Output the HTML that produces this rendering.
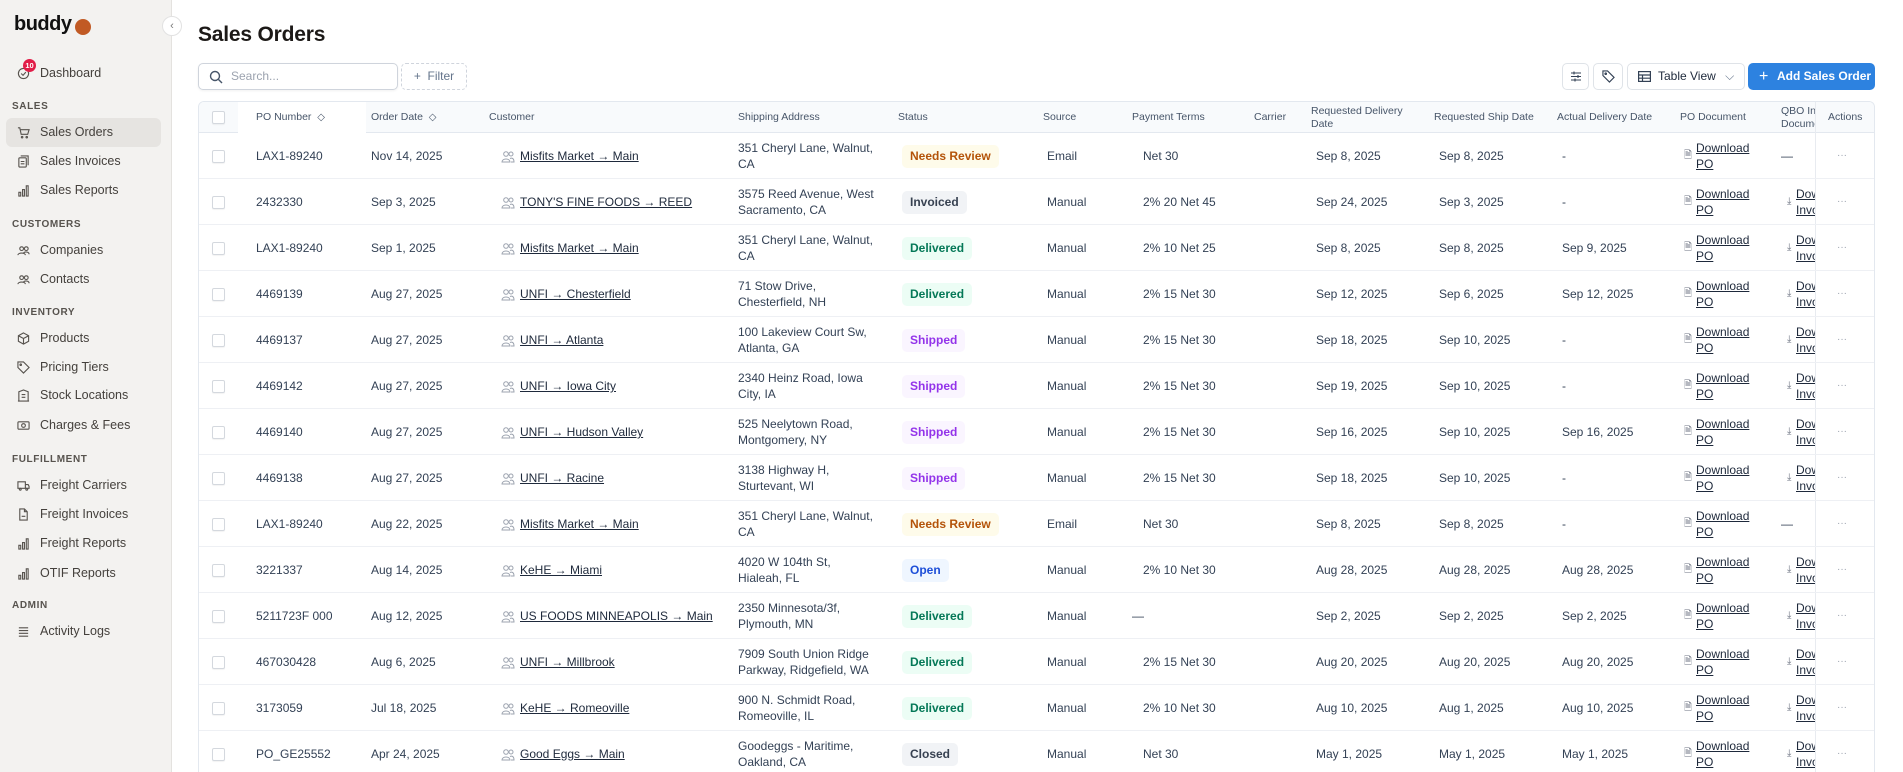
<!DOCTYPE html>
<html><head><meta charset="utf-8">
<style>
*{box-sizing:border-box;margin:0;padding:0}
html,body{width:1903px;height:772px;overflow:hidden}
body{background:#fff;font-family:"Liberation Sans",Arial,sans-serif;color:#334155;position:relative}
.sb{position:absolute;left:0;top:0;width:172px;height:772px;background:#f3f2f0;border-right:1px solid #e4e2df}
.logo{position:absolute;left:14px;top:13px;font-size:20px;font-weight:700;color:#111;letter-spacing:-0.5px}
.dot{position:absolute;left:75px;top:19px;width:16px;height:16px;border-radius:50%;background:#c15a24}
.col{position:absolute;left:162px;top:16px;width:20px;height:20px;border-radius:50%;background:#fff;border:1px solid #e2e2e2;font-size:11px;color:#777;text-align:center;line-height:18px}
.it{position:absolute;left:6px;width:155px;height:29px;border-radius:6px;font-size:12.5px;color:#44403c;line-height:29px;padding-left:34px}
.it.on{background:#e6e4e1}
.it svg{position:absolute;left:11px;top:8px}
.sec{position:absolute;left:12px;font-size:10px;font-weight:700;color:#57534e;letter-spacing:.6px}
h1{position:absolute;left:198px;top:23px;font-size:21px;font-weight:700;color:#1c1917;letter-spacing:-.2px}
.search{position:absolute;left:198px;top:63px;width:200px;height:27px;border:1px solid #cfd4dc;border-radius:5px;box-shadow:0 1px 2px rgba(0,0,0,.06);font-size:12px;color:#9ca3af;line-height:25px;padding-left:32px}
.filter{position:absolute;left:401px;top:63px;width:66px;height:27px;border:1px dashed #cfd4dc;border-radius:5px;font-size:12px;color:#64748b;line-height:25px;text-align:center}
.btn{position:absolute;top:63px;height:27px;border:1px solid #dfe3e8;border-radius:5px;background:#fff;font-size:12px;color:#1e293b;line-height:25px}
.add{position:absolute;left:1748px;top:63px;width:127px;height:27px;border-radius:5px;background:#2d82e0;color:#fff;font-size:12px;font-weight:700;line-height:27px;padding-left:29px;white-space:nowrap}
.tbl{position:absolute;left:198px;top:101px;width:1677px;height:671px;border:1px solid #e3e8ef;border-bottom:none;border-radius:6px 6px 0 0;overflow:hidden}
.hd{position:absolute;left:0;top:0;width:1676px;height:31px;background:#f8fafc;border-bottom:1px solid #e3e8ef}
.h{position:absolute;top:0;height:31px;display:flex;align-items:center;font-size:10.5px;color:#475569;line-height:13px}
.r{position:absolute;left:0;width:1676px;height:46px;border-bottom:1px solid #eef0f4}
.c{position:absolute;top:0;height:46px;display:flex;align-items:center;font-size:12px;color:#334155;line-height:16px;white-space:nowrap}
.cb{width:13px;height:13px;border:1px solid #d4d8de;border-radius:2px;background:#fff;box-shadow:0 1px 1px rgba(0,0,0,.05)}
a{color:#1e293b;text-decoration:underline}
.b{font-weight:700;font-size:12px;padding:0 8px;height:23px;line-height:23px;border-radius:5px;display:inline-block}
.nr{background:#fefbea;color:#b45309}.iv{background:#f1f3f6;color:#374151}.dl{background:#ecfdf5;color:#047857}.sp{background:#faf5ff;color:#9333ea}.op{background:#eff6ff;color:#1d4ed8}.cl{background:#f1f3f6;color:#374151}
.acol{position:absolute;left:1616px;top:0;width:60px;height:700px;border-left:1px solid #e8ebf0}
.q{overflow:hidden;width:19px}
</style></head><body>
<div class="sb">
<div class="logo">buddy</div><div class="dot"></div>
<div class="col">‹</div>
<div class="it" style="top:59px"><svg width="13" height="13" viewBox="0 0 14 14" fill="none" stroke="#57534e" stroke-width="1.2"><circle cx="7" cy="7" r="5.5"/><path d="M4.5 7l2 2 3-3.5"/></svg>Dashboard</div>
<div style="position:absolute;left:23px;top:59px;width:13px;height:13px;border-radius:50%;background:#e11d48;color:#fff;font-size:7.5px;line-height:13px;text-align:center;font-weight:700">10</div>
<div class="sec" style="top:101px">SALES</div>
<div class="it on" style="top:118px"><svg width="13" height="13" viewBox="0 0 14 14" fill="none" stroke="#57534e" stroke-width="1.2"><path d="M1 2h2l1.5 7h7l1.5-5H4"/><circle cx="5.5" cy="12" r=".8"/><circle cx="10.5" cy="12" r=".8"/></svg>Sales Orders</div>
<div class="it" style="top:147px"><svg width="13" height="13" viewBox="0 0 14 14" fill="none" stroke="#57534e" stroke-width="1.2"><rect x="2" y="3" width="8" height="10" rx="1"/><path d="M4 1h8v10M4 7h4M4 9.5h4"/></svg>Sales Invoices</div>
<div class="it" style="top:176px"><svg width="13" height="13" viewBox="0 0 14 14" fill="none" stroke="#57534e" stroke-width="1.2"><path d="M2 13V9h2v4zM6 13V6h2v7zM10 13V2h2v11z"/></svg>Sales Reports</div>
<div class="sec" style="top:219px">CUSTOMERS</div>
<div class="it" style="top:236px"><svg width="13" height="13" viewBox="0 0 14 14" fill="none" stroke="#57534e" stroke-width="1.2"><circle cx="5" cy="5" r="2"/><circle cx="10" cy="5" r="2"/><path d="M1 12c0-3 8-3 8 0M7 10c1-2 6-2 6 1"/></svg>Companies</div>
<div class="it" style="top:265px"><svg width="13" height="13" viewBox="0 0 14 14" fill="none" stroke="#57534e" stroke-width="1.2"><circle cx="5" cy="5" r="2"/><circle cx="10" cy="5" r="2"/><path d="M1 12c0-3 8-3 8 0M7 10c1-2 6-2 6 1"/></svg>Contacts</div>
<div class="sec" style="top:307px">INVENTORY</div>
<div class="it" style="top:324px"><svg width="13" height="13" viewBox="0 0 14 14" fill="none" stroke="#57534e" stroke-width="1.2"><path d="M7 1l5.5 3v6L7 13 1.5 10V4zM1.5 4L7 7l5.5-3M7 7v6"/></svg>Products</div>
<div class="it" style="top:353px"><svg width="13" height="13" viewBox="0 0 14 14" fill="none" stroke="#57534e" stroke-width="1.2"><path d="M1 7V1h6l6 6-6 6z"/><circle cx="4" cy="4" r=".8"/></svg>Pricing Tiers</div>
<div class="it" style="top:381px"><svg width="13" height="13" viewBox="0 0 14 14" fill="none" stroke="#57534e" stroke-width="1.2"><path d="M1 13h12M2 13V3l5-2 5 2v10M5 6h4M5 9h4"/></svg>Stock Locations</div>
<div class="it" style="top:411px"><svg width="13" height="13" viewBox="0 0 14 14" fill="none" stroke="#57534e" stroke-width="1.2"><rect x="1" y="3" width="12" height="8" rx="1"/><circle cx="7" cy="7" r="2"/></svg>Charges &amp; Fees</div>
<div class="sec" style="top:454px">FULFILLMENT</div>
<div class="it" style="top:471px"><svg width="13" height="13" viewBox="0 0 14 14" fill="none" stroke="#57534e" stroke-width="1.2"><path d="M1 3h8v7H1zM9 6h3l1 2v2H9"/><circle cx="3.5" cy="11" r="1"/><circle cx="10.5" cy="11" r="1"/></svg>Freight Carriers</div>
<div class="it" style="top:500px"><svg width="13" height="13" viewBox="0 0 14 14" fill="none" stroke="#57534e" stroke-width="1.2"><path d="M3 1h5l3 3v9H3zM8 1v3h3M5 9h4"/></svg>Freight Invoices</div>
<div class="it" style="top:529px"><svg width="13" height="13" viewBox="0 0 14 14" fill="none" stroke="#57534e" stroke-width="1.2"><path d="M2 13V9h2v4zM6 13V6h2v7zM10 13V2h2v11z"/></svg>Freight Reports</div>
<div class="it" style="top:559px"><svg width="13" height="13" viewBox="0 0 14 14" fill="none" stroke="#57534e" stroke-width="1.2"><path d="M2 13V9h2v4zM6 13V6h2v7zM10 13V2h2v11z"/></svg>OTIF Reports</div>
<div class="sec" style="top:600px">ADMIN</div>
<div class="it" style="top:617px"><svg width="13" height="13" viewBox="0 0 14 14" fill="none" stroke="#57534e" stroke-width="1.2"><path d="M2 3h10M2 6h10M2 9h10M2 12h10"/></svg>Activity Logs</div>
</div>

<h1>Sales Orders</h1>
<div class="search"><svg style="position:absolute;left:10px;top:6px" width="14" height="14" viewBox="0 0 14 14" fill="none" stroke="#475569" stroke-width="1.4"><circle cx="6" cy="6" r="4.5"/><path d="M9.5 9.5l3.5 3.5"/></svg>Search...</div>
<div class="filter">+&nbsp; Filter</div>
<div class="btn" style="left:1562px;width:27px"><svg style="position:absolute;left:7px;top:6px" width="12" height="13" viewBox="0 0 12 13" fill="none" stroke="#334155" stroke-width="1.1"><path d="M1 3h10M1 6.5h10M1 10h10M4 1.5v3M8 5v3M5 8.5v3"/></svg></div>
<div class="btn" style="left:1593px;width:30px"><svg style="position:absolute;left:8px;top:6px" width="13" height="13" viewBox="0 0 14 14" fill="none" stroke="#334155" stroke-width="1.2"><path d="M1 6V1h5l7 7-5 5z"/><circle cx="4" cy="4" r=".8"/></svg></div>
<div class="btn" style="left:1627px;width:118px;padding-left:30px"><svg style="position:absolute;left:10px;top:7px" width="13" height="11" viewBox="0 0 13 11" fill="none" stroke="#334155" stroke-width="1.2"><rect x=".6" y=".6" width="11.8" height="9.8"/><path d="M.6 4h11.8M.6 7.2h11.8M4.5 4v6.4"/></svg>Table View <span style="color:#64748b;margin-left:6px">⌵</span></div>
<div class="add"><span style="position:absolute;left:11px;font-size:16px;font-weight:400">+</span>Add Sales Order</div>

<div class="tbl">
<div class="hd">
<div style="position:absolute;left:39px;top:0;width:128px;height:31px;background:#fff"></div>
<div class="h" style="left:13px"><div class="cb"></div></div>
<div class="h" style="left:57px">PO Number&nbsp;&nbsp;<span style="font-size:10px">◇</span></div>
<div class="h" style="left:172px">Order Date&nbsp;&nbsp;<span style="font-size:10px">◇</span></div>
<div class="h" style="left:290px">Customer</div>
<div class="h" style="left:539px">Shipping Address</div>
<div class="h" style="left:699px">Status</div>
<div class="h" style="left:844px">Source</div>
<div class="h" style="left:933px">Payment Terms</div>
<div class="h" style="left:1055px">Carrier</div>
<div class="h" style="left:1112px">Requested Delivery<br>Date</div>
<div class="h" style="left:1235px">Requested Ship Date</div>
<div class="h" style="left:1358px">Actual Delivery Date</div>
<div class="h" style="left:1481px">PO Document</div>
<div class="h" style="left:1582px;width:34px;overflow:hidden;white-space:nowrap">QBO Invoice<br>Document</div>
</div>
<div class="acol"><div class="h" style="left:12px">Actions</div></div>

<div class="r" style="top:31px"><div class="c" style="left:13px"><div class="cb"></div></div><div class="c" style="left:57px">LAX1-89240</div><div class="c" style="left:172px">Nov 14, 2025</div><div class="c" style="left:302px"><svg width="14" height="13" viewBox="0 0 14 13" fill="none" stroke="#9ca3af" stroke-width="1"><circle cx="5" cy="4" r="2.3"/><circle cx="10" cy="4" r="2"/><path d="M1 12c0-4 8-4 8 0zM9 8.5c2-1 4 0 4 3.5h-3"/></svg></div><div class="c" style="left:321px"><a>Misfits Market → Main</a></div><div class="c" style="left:539px">351 Cheryl Lane, Walnut,<br>CA</div><div class="c" style="left:703px"><span class="b nr">Needs Review</span></div><div class="c" style="left:848px">Email</div><div class="c" style="left:944px">Net 30</div><div class="c" style="left:1117px">Sep 8, 2025</div><div class="c" style="left:1240px">Sep 8, 2025</div><div class="c" style="left:1363px">-</div><div class="c" style="left:1485px;color:#6b7280;font-size:10px">🗎</div><div class="c" style="left:1497px"><a>Download<br>PO</a></div><div class="c" style="left:1582px">—</div><div class="c" style="left:1638px;color:#9ca3af;font-size:10px">···</div></div>

<div class="r" style="top:77px"><div class="c" style="left:13px"><div class="cb"></div></div><div class="c" style="left:57px">2432330</div><div class="c" style="left:172px">Sep 3, 2025</div><div class="c" style="left:302px"><svg width="14" height="13" viewBox="0 0 14 13" fill="none" stroke="#9ca3af" stroke-width="1"><circle cx="5" cy="4" r="2.3"/><circle cx="10" cy="4" r="2"/><path d="M1 12c0-4 8-4 8 0zM9 8.5c2-1 4 0 4 3.5h-3"/></svg></div><div class="c" style="left:321px"><a>TONY'S FINE FOODS → REED</a></div><div class="c" style="left:539px">3575 Reed Avenue, West<br>Sacramento, CA</div><div class="c" style="left:703px"><span class="b iv">Invoiced</span></div><div class="c" style="left:848px">Manual</div><div class="c" style="left:944px">2% 20 Net 45</div><div class="c" style="left:1117px">Sep 24, 2025</div><div class="c" style="left:1240px">Sep 3, 2025</div><div class="c" style="left:1363px">-</div><div class="c" style="left:1485px;color:#6b7280;font-size:10px">🗎</div><div class="c" style="left:1497px"><a>Download<br>PO</a></div><div class="c" style="left:1588px;color:#6b7280;font-size:10px">⤓</div><div class="c q" style="left:1597px"><a>Download<br>Invoice</a></div><div class="c" style="left:1638px;color:#9ca3af;font-size:10px">···</div></div>

<div class="r" style="top:123px"><div class="c" style="left:13px"><div class="cb"></div></div><div class="c" style="left:57px">LAX1-89240</div><div class="c" style="left:172px">Sep 1, 2025</div><div class="c" style="left:302px"><svg width="14" height="13" viewBox="0 0 14 13" fill="none" stroke="#9ca3af" stroke-width="1"><circle cx="5" cy="4" r="2.3"/><circle cx="10" cy="4" r="2"/><path d="M1 12c0-4 8-4 8 0zM9 8.5c2-1 4 0 4 3.5h-3"/></svg></div><div class="c" style="left:321px"><a>Misfits Market → Main</a></div><div class="c" style="left:539px">351 Cheryl Lane, Walnut,<br>CA</div><div class="c" style="left:703px"><span class="b dl">Delivered</span></div><div class="c" style="left:848px">Manual</div><div class="c" style="left:944px">2% 10 Net 25</div><div class="c" style="left:1117px">Sep 8, 2025</div><div class="c" style="left:1240px">Sep 8, 2025</div><div class="c" style="left:1363px">Sep 9, 2025</div><div class="c" style="left:1485px;color:#6b7280;font-size:10px">🗎</div><div class="c" style="left:1497px"><a>Download<br>PO</a></div><div class="c" style="left:1588px;color:#6b7280;font-size:10px">⤓</div><div class="c q" style="left:1597px"><a>Download<br>Invoice</a></div><div class="c" style="left:1638px;color:#9ca3af;font-size:10px">···</div></div>

<div class="r" style="top:169px"><div class="c" style="left:13px"><div class="cb"></div></div><div class="c" style="left:57px">4469139</div><div class="c" style="left:172px">Aug 27, 2025</div><div class="c" style="left:302px"><svg width="14" height="13" viewBox="0 0 14 13" fill="none" stroke="#9ca3af" stroke-width="1"><circle cx="5" cy="4" r="2.3"/><circle cx="10" cy="4" r="2"/><path d="M1 12c0-4 8-4 8 0zM9 8.5c2-1 4 0 4 3.5h-3"/></svg></div><div class="c" style="left:321px"><a>UNFI → Chesterfield</a></div><div class="c" style="left:539px">71 Stow Drive,<br>Chesterfield, NH</div><div class="c" style="left:703px"><span class="b dl">Delivered</span></div><div class="c" style="left:848px">Manual</div><div class="c" style="left:944px">2% 15 Net 30</div><div class="c" style="left:1117px">Sep 12, 2025</div><div class="c" style="left:1240px">Sep 6, 2025</div><div class="c" style="left:1363px">Sep 12, 2025</div><div class="c" style="left:1485px;color:#6b7280;font-size:10px">🗎</div><div class="c" style="left:1497px"><a>Download<br>PO</a></div><div class="c" style="left:1588px;color:#6b7280;font-size:10px">⤓</div><div class="c q" style="left:1597px"><a>Download<br>Invoice</a></div><div class="c" style="left:1638px;color:#9ca3af;font-size:10px">···</div></div>

<div class="r" style="top:215px"><div class="c" style="left:13px"><div class="cb"></div></div><div class="c" style="left:57px">4469137</div><div class="c" style="left:172px">Aug 27, 2025</div><div class="c" style="left:302px"><svg width="14" height="13" viewBox="0 0 14 13" fill="none" stroke="#9ca3af" stroke-width="1"><circle cx="5" cy="4" r="2.3"/><circle cx="10" cy="4" r="2"/><path d="M1 12c0-4 8-4 8 0zM9 8.5c2-1 4 0 4 3.5h-3"/></svg></div><div class="c" style="left:321px"><a>UNFI → Atlanta</a></div><div class="c" style="left:539px">100 Lakeview Court Sw,<br>Atlanta, GA</div><div class="c" style="left:703px"><span class="b sp">Shipped</span></div><div class="c" style="left:848px">Manual</div><div class="c" style="left:944px">2% 15 Net 30</div><div class="c" style="left:1117px">Sep 18, 2025</div><div class="c" style="left:1240px">Sep 10, 2025</div><div class="c" style="left:1363px">-</div><div class="c" style="left:1485px;color:#6b7280;font-size:10px">🗎</div><div class="c" style="left:1497px"><a>Download<br>PO</a></div><div class="c" style="left:1588px;color:#6b7280;font-size:10px">⤓</div><div class="c q" style="left:1597px"><a>Download<br>Invoice</a></div><div class="c" style="left:1638px;color:#9ca3af;font-size:10px">···</div></div>

<div class="r" style="top:261px"><div class="c" style="left:13px"><div class="cb"></div></div><div class="c" style="left:57px">4469142</div><div class="c" style="left:172px">Aug 27, 2025</div><div class="c" style="left:302px"><svg width="14" height="13" viewBox="0 0 14 13" fill="none" stroke="#9ca3af" stroke-width="1"><circle cx="5" cy="4" r="2.3"/><circle cx="10" cy="4" r="2"/><path d="M1 12c0-4 8-4 8 0zM9 8.5c2-1 4 0 4 3.5h-3"/></svg></div><div class="c" style="left:321px"><a>UNFI → Iowa City</a></div><div class="c" style="left:539px">2340 Heinz Road, Iowa<br>City, IA</div><div class="c" style="left:703px"><span class="b sp">Shipped</span></div><div class="c" style="left:848px">Manual</div><div class="c" style="left:944px">2% 15 Net 30</div><div class="c" style="left:1117px">Sep 19, 2025</div><div class="c" style="left:1240px">Sep 10, 2025</div><div class="c" style="left:1363px">-</div><div class="c" style="left:1485px;color:#6b7280;font-size:10px">🗎</div><div class="c" style="left:1497px"><a>Download<br>PO</a></div><div class="c" style="left:1588px;color:#6b7280;font-size:10px">⤓</div><div class="c q" style="left:1597px"><a>Download<br>Invoice</a></div><div class="c" style="left:1638px;color:#9ca3af;font-size:10px">···</div></div>

<div class="r" style="top:307px"><div class="c" style="left:13px"><div class="cb"></div></div><div class="c" style="left:57px">4469140</div><div class="c" style="left:172px">Aug 27, 2025</div><div class="c" style="left:302px"><svg width="14" height="13" viewBox="0 0 14 13" fill="none" stroke="#9ca3af" stroke-width="1"><circle cx="5" cy="4" r="2.3"/><circle cx="10" cy="4" r="2"/><path d="M1 12c0-4 8-4 8 0zM9 8.5c2-1 4 0 4 3.5h-3"/></svg></div><div class="c" style="left:321px"><a>UNFI → Hudson Valley</a></div><div class="c" style="left:539px">525 Neelytown Road,<br>Montgomery, NY</div><div class="c" style="left:703px"><span class="b sp">Shipped</span></div><div class="c" style="left:848px">Manual</div><div class="c" style="left:944px">2% 15 Net 30</div><div class="c" style="left:1117px">Sep 16, 2025</div><div class="c" style="left:1240px">Sep 10, 2025</div><div class="c" style="left:1363px">Sep 16, 2025</div><div class="c" style="left:1485px;color:#6b7280;font-size:10px">🗎</div><div class="c" style="left:1497px"><a>Download<br>PO</a></div><div class="c" style="left:1588px;color:#6b7280;font-size:10px">⤓</div><div class="c q" style="left:1597px"><a>Download<br>Invoice</a></div><div class="c" style="left:1638px;color:#9ca3af;font-size:10px">···</div></div>

<div class="r" style="top:353px"><div class="c" style="left:13px"><div class="cb"></div></div><div class="c" style="left:57px">4469138</div><div class="c" style="left:172px">Aug 27, 2025</div><div class="c" style="left:302px"><svg width="14" height="13" viewBox="0 0 14 13" fill="none" stroke="#9ca3af" stroke-width="1"><circle cx="5" cy="4" r="2.3"/><circle cx="10" cy="4" r="2"/><path d="M1 12c0-4 8-4 8 0zM9 8.5c2-1 4 0 4 3.5h-3"/></svg></div><div class="c" style="left:321px"><a>UNFI → Racine</a></div><div class="c" style="left:539px">3138 Highway H,<br>Sturtevant, WI</div><div class="c" style="left:703px"><span class="b sp">Shipped</span></div><div class="c" style="left:848px">Manual</div><div class="c" style="left:944px">2% 15 Net 30</div><div class="c" style="left:1117px">Sep 18, 2025</div><div class="c" style="left:1240px">Sep 10, 2025</div><div class="c" style="left:1363px">-</div><div class="c" style="left:1485px;color:#6b7280;font-size:10px">🗎</div><div class="c" style="left:1497px"><a>Download<br>PO</a></div><div class="c" style="left:1588px;color:#6b7280;font-size:10px">⤓</div><div class="c q" style="left:1597px"><a>Download<br>Invoice</a></div><div class="c" style="left:1638px;color:#9ca3af;font-size:10px">···</div></div>

<div class="r" style="top:399px"><div class="c" style="left:13px"><div class="cb"></div></div><div class="c" style="left:57px">LAX1-89240</div><div class="c" style="left:172px">Aug 22, 2025</div><div class="c" style="left:302px"><svg width="14" height="13" viewBox="0 0 14 13" fill="none" stroke="#9ca3af" stroke-width="1"><circle cx="5" cy="4" r="2.3"/><circle cx="10" cy="4" r="2"/><path d="M1 12c0-4 8-4 8 0zM9 8.5c2-1 4 0 4 3.5h-3"/></svg></div><div class="c" style="left:321px"><a>Misfits Market → Main</a></div><div class="c" style="left:539px">351 Cheryl Lane, Walnut,<br>CA</div><div class="c" style="left:703px"><span class="b nr">Needs Review</span></div><div class="c" style="left:848px">Email</div><div class="c" style="left:944px">Net 30</div><div class="c" style="left:1117px">Sep 8, 2025</div><div class="c" style="left:1240px">Sep 8, 2025</div><div class="c" style="left:1363px">-</div><div class="c" style="left:1485px;color:#6b7280;font-size:10px">🗎</div><div class="c" style="left:1497px"><a>Download<br>PO</a></div><div class="c" style="left:1582px">—</div><div class="c" style="left:1638px;color:#9ca3af;font-size:10px">···</div></div>

<div class="r" style="top:445px"><div class="c" style="left:13px"><div class="cb"></div></div><div class="c" style="left:57px">3221337</div><div class="c" style="left:172px">Aug 14, 2025</div><div class="c" style="left:302px"><svg width="14" height="13" viewBox="0 0 14 13" fill="none" stroke="#9ca3af" stroke-width="1"><circle cx="5" cy="4" r="2.3"/><circle cx="10" cy="4" r="2"/><path d="M1 12c0-4 8-4 8 0zM9 8.5c2-1 4 0 4 3.5h-3"/></svg></div><div class="c" style="left:321px"><a>KeHE → Miami</a></div><div class="c" style="left:539px">4020 W 104th St,<br>Hialeah, FL</div><div class="c" style="left:703px"><span class="b op">Open</span></div><div class="c" style="left:848px">Manual</div><div class="c" style="left:944px">2% 10 Net 30</div><div class="c" style="left:1117px">Aug 28, 2025</div><div class="c" style="left:1240px">Aug 28, 2025</div><div class="c" style="left:1363px">Aug 28, 2025</div><div class="c" style="left:1485px;color:#6b7280;font-size:10px">🗎</div><div class="c" style="left:1497px"><a>Download<br>PO</a></div><div class="c" style="left:1588px;color:#6b7280;font-size:10px">⤓</div><div class="c q" style="left:1597px"><a>Download<br>Invoice</a></div><div class="c" style="left:1638px;color:#9ca3af;font-size:10px">···</div></div>

<div class="r" style="top:491px"><div class="c" style="left:13px"><div class="cb"></div></div><div class="c" style="left:57px;width:76px;overflow:hidden">5211723F 0000</div><div class="c" style="left:172px">Aug 12, 2025</div><div class="c" style="left:302px"><svg width="14" height="13" viewBox="0 0 14 13" fill="none" stroke="#9ca3af" stroke-width="1"><circle cx="5" cy="4" r="2.3"/><circle cx="10" cy="4" r="2"/><path d="M1 12c0-4 8-4 8 0zM9 8.5c2-1 4 0 4 3.5h-3"/></svg></div><div class="c" style="left:321px"><a>US FOODS MINNEAPOLIS → Main</a></div><div class="c" style="left:539px">2350 Minnesota/3f,<br>Plymouth, MN</div><div class="c" style="left:703px"><span class="b dl">Delivered</span></div><div class="c" style="left:848px">Manual</div><div class="c" style="left:933px">—</div><div class="c" style="left:1117px">Sep 2, 2025</div><div class="c" style="left:1240px">Sep 2, 2025</div><div class="c" style="left:1363px">Sep 2, 2025</div><div class="c" style="left:1485px;color:#6b7280;font-size:10px">🗎</div><div class="c" style="left:1497px"><a>Download<br>PO</a></div><div class="c" style="left:1588px;color:#6b7280;font-size:10px">⤓</div><div class="c q" style="left:1597px"><a>Download<br>Invoice</a></div><div class="c" style="left:1638px;color:#9ca3af;font-size:10px">···</div></div>

<div class="r" style="top:537px"><div class="c" style="left:13px"><div class="cb"></div></div><div class="c" style="left:57px">467030428</div><div class="c" style="left:172px">Aug 6, 2025</div><div class="c" style="left:302px"><svg width="14" height="13" viewBox="0 0 14 13" fill="none" stroke="#9ca3af" stroke-width="1"><circle cx="5" cy="4" r="2.3"/><circle cx="10" cy="4" r="2"/><path d="M1 12c0-4 8-4 8 0zM9 8.5c2-1 4 0 4 3.5h-3"/></svg></div><div class="c" style="left:321px"><a>UNFI → Millbrook</a></div><div class="c" style="left:539px">7909 South Union Ridge<br>Parkway, Ridgefield, WA</div><div class="c" style="left:703px"><span class="b dl">Delivered</span></div><div class="c" style="left:848px">Manual</div><div class="c" style="left:944px">2% 15 Net 30</div><div class="c" style="left:1117px">Aug 20, 2025</div><div class="c" style="left:1240px">Aug 20, 2025</div><div class="c" style="left:1363px">Aug 20, 2025</div><div class="c" style="left:1485px;color:#6b7280;font-size:10px">🗎</div><div class="c" style="left:1497px"><a>Download<br>PO</a></div><div class="c" style="left:1588px;color:#6b7280;font-size:10px">⤓</div><div class="c q" style="left:1597px"><a>Download<br>Invoice</a></div><div class="c" style="left:1638px;color:#9ca3af;font-size:10px">···</div></div>

<div class="r" style="top:583px"><div class="c" style="left:13px"><div class="cb"></div></div><div class="c" style="left:57px">3173059</div><div class="c" style="left:172px">Jul 18, 2025</div><div class="c" style="left:302px"><svg width="14" height="13" viewBox="0 0 14 13" fill="none" stroke="#9ca3af" stroke-width="1"><circle cx="5" cy="4" r="2.3"/><circle cx="10" cy="4" r="2"/><path d="M1 12c0-4 8-4 8 0zM9 8.5c2-1 4 0 4 3.5h-3"/></svg></div><div class="c" style="left:321px"><a>KeHE → Romeoville</a></div><div class="c" style="left:539px">900 N. Schmidt Road,<br>Romeoville, IL</div><div class="c" style="left:703px"><span class="b dl">Delivered</span></div><div class="c" style="left:848px">Manual</div><div class="c" style="left:944px">2% 10 Net 30</div><div class="c" style="left:1117px">Aug 10, 2025</div><div class="c" style="left:1240px">Aug 1, 2025</div><div class="c" style="left:1363px">Aug 10, 2025</div><div class="c" style="left:1485px;color:#6b7280;font-size:10px">🗎</div><div class="c" style="left:1497px"><a>Download<br>PO</a></div><div class="c" style="left:1588px;color:#6b7280;font-size:10px">⤓</div><div class="c q" style="left:1597px"><a>Download<br>Invoice</a></div><div class="c" style="left:1638px;color:#9ca3af;font-size:10px">···</div></div>

<div class="r" style="top:629px"><div class="c" style="left:13px"><div class="cb"></div></div><div class="c" style="left:57px">PO_GE25552</div><div class="c" style="left:172px">Apr 24, 2025</div><div class="c" style="left:302px"><svg width="14" height="13" viewBox="0 0 14 13" fill="none" stroke="#9ca3af" stroke-width="1"><circle cx="5" cy="4" r="2.3"/><circle cx="10" cy="4" r="2"/><path d="M1 12c0-4 8-4 8 0zM9 8.5c2-1 4 0 4 3.5h-3"/></svg></div><div class="c" style="left:321px"><a>Good Eggs → Main</a></div><div class="c" style="left:539px">Goodeggs - Maritime,<br>Oakland, CA</div><div class="c" style="left:703px"><span class="b cl">Closed</span></div><div class="c" style="left:848px">Manual</div><div class="c" style="left:944px">Net 30</div><div class="c" style="left:1117px">May 1, 2025</div><div class="c" style="left:1240px">May 1, 2025</div><div class="c" style="left:1363px">May 1, 2025</div><div class="c" style="left:1485px;color:#6b7280;font-size:10px">🗎</div><div class="c" style="left:1497px"><a>Download<br>PO</a></div><div class="c" style="left:1588px;color:#6b7280;font-size:10px">⤓</div><div class="c q" style="left:1597px"><a>Download<br>Invoice</a></div><div class="c" style="left:1638px;color:#9ca3af;font-size:10px">···</div></div>
</div>
</body></html>
